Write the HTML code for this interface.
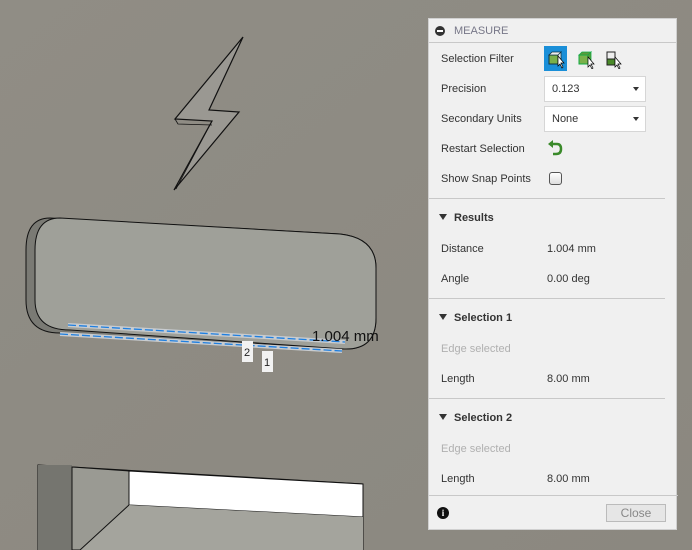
<!DOCTYPE html>
<html><head><meta charset="utf-8"><style>
*{margin:0;padding:0;box-sizing:border-box}
body{width:692px;height:550px;overflow:hidden;background:#8e8b83;font-family:"Liberation Sans",sans-serif;font-size:11px;color:#333;position:relative}
#scene{position:absolute;left:0;top:0}
.panel{position:absolute;left:428px;top:18px;width:249px;height:512px;background:#f0f0f0;border:1px solid #d0d0d0}
.hdr{height:24px;border-bottom:1px solid #c8c8c8;position:relative}
.hdr .dot{position:absolute;left:6px;top:7px;width:10px;height:10px;border-radius:50%;background:#333}
.hdr .dot:after{content:"";position:absolute;left:2px;top:4px;width:6px;height:2px;background:#fff}
.hdr span{position:absolute;left:25px;top:6px;color:#778;font-size:11px}
.row{position:absolute;left:12px;height:14px;line-height:14px}
.val{position:absolute;left:118px;height:14px;line-height:14px}
.gray{color:#b0b0b0}
.sec{position:absolute;left:10px;font-weight:bold;font-size:11px}
.sec:before{content:"";display:inline-block;border-left:4px solid transparent;border-right:4px solid transparent;border-top:6px solid #333;margin-right:7px;vertical-align:1px}
.sep{position:absolute;left:0;width:236px;height:1px;background:#c8c8c8}
.sel{position:absolute;left:115px;width:102px;height:26px;background:#fff;border:1px solid #d6d6d6;padding-left:7px;line-height:24px}
.sel:after{content:"";position:absolute;right:6px;top:10px;border-left:3px solid transparent;border-right:3px solid transparent;border-top:4px solid #333}
</style></head><body>
<svg id="scene" width="692" height="550">
<defs><linearGradient id="bg" x1="0" y1="0" x2="1" y2="1"><stop offset="0" stop-color="#908d85"/><stop offset="1" stop-color="#8b8880"/></linearGradient></defs>
<rect width="692" height="550" fill="url(#bg)"/>
<path d="M243,37 L175,119 L212,121 L174,190 L239,112 L209,110 Z" fill="#9a9892" stroke="#111" stroke-width="1.2"/>
<path d="M212,121 L176,189 M175,119 L178,124 L212,125" stroke="#111" stroke-width="0.8" fill="none"/>
<path d="M50,218 L340,234 Q376,238 376,268 L376,318 Q376,350 344,349 L60,333 Q26,333 26,300 L26,250 Q26,218 50,218 Z" fill="#7a7a74" stroke="#111"/>
<path d="M60,218 L340,234 Q376,238 376,268 L376,318 Q376,350 344,349 L70,330 Q35,330 35,300 L35,250 Q35,218 60,218 Z" fill="#9fa099" stroke="#111"/>
<path d="M68,325 L345,342 M60,334 L342,351" stroke="#c8ccd0" stroke-width="4"/>
<path d="M68,325 L345,342 M60,334 L342,351" stroke="#1e7fe0" stroke-width="1.3" stroke-dasharray="8,3"/>
<text x="312" y="341" font-size="15" fill="#111" font-family="Liberation Sans">1.004 mm</text>
<rect x="242" y="341" width="11" height="21" fill="#f2f2f2"/><text x="244" y="356" font-size="11" fill="#222">2</text>
<rect x="262" y="351" width="11" height="21" fill="#f2f2f2"/><text x="264" y="366" font-size="11" fill="#222">1</text>
<path d="M38,465 L363,484 L363,550 L38,550 Z" fill="#8a8a84" stroke="#111"/>
<rect x="38" y="465" width="34" height="85" fill="#75756f"/>
<path d="M72,467 L129,471 L129,550 L72,550Z" fill="#9a9a93" stroke="#111"/>
<path d="M129,471 L363,484 L363,517 L129,505 Z" fill="#fff" stroke="#111"/>
<path d="M129,505 L363,517 L363,550 L80,550 Z" fill="#a4a49d"/>
<path d="M129,505 L80,550" stroke="#111"/>
</svg>
<div class="panel">
<div class="hdr"><div class="dot"></div><span>MEASURE</span></div>
<div class="row" style="top:33px">Selection Filter</div>
<div style="position:absolute;left:115px;top:27px;width:23px;height:25px;background:#1a8fd8"></div>
<svg style="position:absolute;left:118px;top:30px" width="90" height="20">
<rect x="2" y="6" width="9" height="9" fill="#7ab04a" stroke="#134"/><path d="M2,6 L5,3 L14,3 L11,6Z M11,6 L14,3 L14,12 L11,15Z" fill="#eee" stroke="#134" stroke-width="0.8"/><path d="M11,7 L11,17 L13,15 L15,19 L16,18 L14,14 L17,14Z" fill="#fff" stroke="#000" stroke-width="0.7"/>
<rect x="32" y="6" width="9" height="9" fill="#7ab04a" stroke="#1a4"/><path d="M32,6 L35,3 L44,3 L41,6Z M41,6 L44,3 L44,12 L41,15Z" fill="#5a9a3a" stroke="#1a4" stroke-width="0.8"/><path d="M41,8 L41,18 L43,16 L45,20 L46,19 L44,15 L47,15Z" fill="#fff" stroke="#000" stroke-width="0.7"/>
<rect x="60" y="3" width="8" height="7" fill="#eee" stroke="#222"/><rect x="60" y="10" width="8" height="6" fill="#4a8a2a" stroke="#222"/><path d="M68,8 L68,18 L70,16 L72,20 L73,19 L71,15 L74,15Z" fill="#fff" stroke="#000" stroke-width="0.7"/>
</svg>
<div class="row" style="top:63px">Precision</div><div class="sel" style="top:57px">0.123</div>
<div class="row" style="top:93px">Secondary Units</div><div class="sel" style="top:87px">None</div>
<div class="row" style="top:123px">Restart Selection</div>
<svg style="position:absolute;left:118px;top:121px" width="16" height="16"><path d="M5,4 L10,4 Q14,4 14,9 Q14,14 9,14 L6,14" fill="none" stroke="#3a8a2a" stroke-width="2.5"/><path d="M1,4 L6,0 L6,8Z" fill="#3a8a2a"/></svg>
<div class="row" style="top:153px">Show Snap Points</div>
<div style="position:absolute;left:120px;top:153px;width:13px;height:13px;border:1px solid #555;border-radius:3px;background:linear-gradient(#fff,#ddd)"></div>
<div class="sep" style="top:179px"></div>
<div class="sec" style="top:193px">Results</div>
<div class="row" style="top:223px">Distance</div><div class="val" style="top:223px">1.004 mm</div>
<div class="row" style="top:253px">Angle</div><div class="val" style="top:253px">0.00 deg</div>
<div class="sep" style="top:279px"></div>
<div class="sec" style="top:293px">Selection 1</div>
<div class="row gray" style="top:323px">Edge selected</div>
<div class="row" style="top:353px">Length</div><div class="val" style="top:353px">8.00 mm</div>
<div class="sep" style="top:379px"></div>
<div class="sec" style="top:393px">Selection 2</div>
<div class="row gray" style="top:423px">Edge selected</div>
<div class="row" style="top:453px">Length</div><div class="val" style="top:453px">8.00 mm</div>
<div class="sep" style="top:476px;width:249px"></div>
<div style="position:absolute;left:8px;top:488px;width:12px;height:12px;border-radius:50%;background:#111;color:#fff;font-size:9px;font-weight:bold;text-align:center;line-height:12px;font-family:'Liberation Serif',serif">i</div>
<div style="position:absolute;left:177px;top:485px;width:60px;height:18px;border:1px solid #bbb;background:#e6e6e6;color:#888;text-align:center;line-height:16px;font-size:12px">Close</div>
</div>
</body></html>
